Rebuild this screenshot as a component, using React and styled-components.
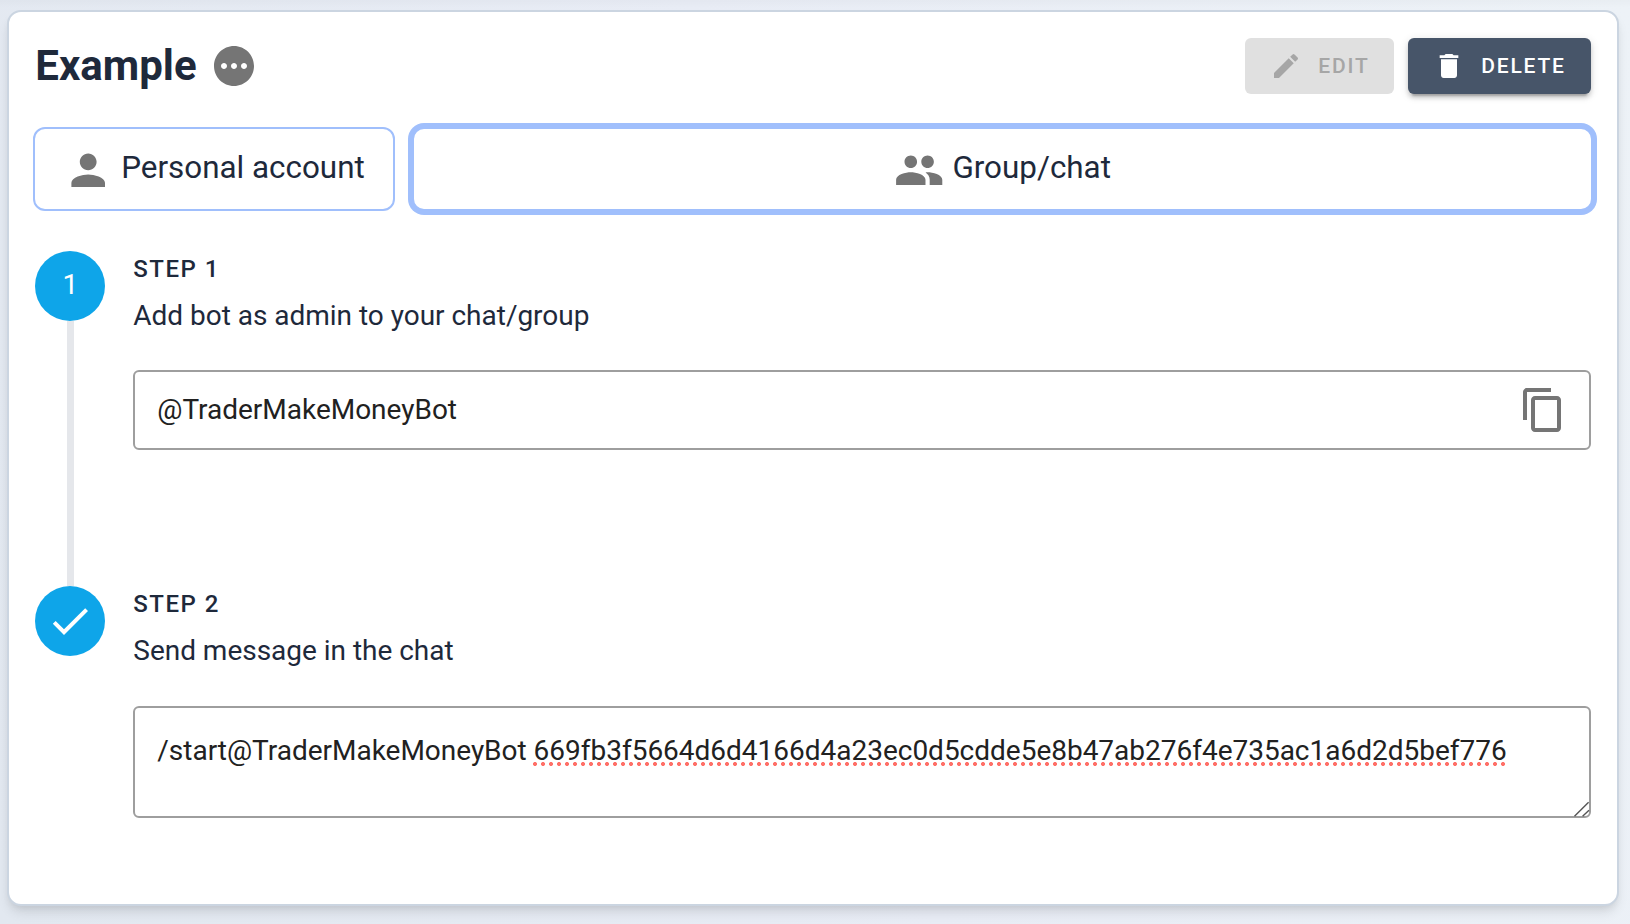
import React from "react";
import styled, { createGlobalStyle, css } from "styled-components";

const GlobalStyle = createGlobalStyle`
  *, *::before, *::after { box-sizing: border-box; }
  body {
    margin: 0;
    font-family: Roboto, "Liberation Sans", sans-serif;
    font-size: 28px;
    color: #1e293b;
  }
  button { font-family: inherit; margin: 0; }
`;

const Page = styled.main`
  display: flex;
  height: 924px;
  padding: 10px 11.3px 18px 7.3px;
  background:
    linear-gradient(to bottom, rgba(0, 0, 0, 0.018), rgba(0, 0, 0, 0) 8px),
    linear-gradient(75deg, #e2e8f0 0%, #e8ecf5 50%, #edf2f7 100%);
`;

const Card = styled.section`
  flex: 1;
  min-width: 0;
  padding: 26px 26px 0 24px;
  background: #fff;
  border: 2px solid #cbd5e1;
  border-radius: 14px;
  box-shadow: 0 8px 12px -2px rgba(0, 0, 0, 0.1), 0 4px 8px -4px rgba(0, 0, 0, 0.1);
`;

const Header = styled.header`
  display: flex;
  align-items: center;
  height: 56px;
  padding-left: 2px;
`;

const Title = styled.h1`
  margin: 0 13px 0 0;
  font-size: 42px;
  font-weight: 700;
  line-height: 56px;
`;

const Actions = styled.div`
  display: flex;
  gap: 14px;
  margin-left: auto;
`;

const ActionButton = styled.button`
  display: flex;
  align-items: center;
  gap: 16.6px;
  width: ${(p) => p.$width}px;
  height: 56px;
  padding: 0 0 0 25px;
  border: 0;
  border-radius: 6px;
  font-size: 21px;
  font-weight: 500;
  letter-spacing: 1.8px;
  white-space: nowrap;
  text-transform: uppercase;
  ${(p) =>
    p.disabled
      ? css`
          background: #e0e0e0;
          color: #a6a6a6;
        `
      : css`
          background: #475569;
          color: #fff;
          box-shadow: 0 6px 2px -4px rgba(0, 0, 0, 0.2), 0 4px 4px rgba(0, 0, 0, 0.14),
            0 2px 10px rgba(0, 0, 0, 0.12);
        `}
`;

const Icon = styled.svg`
  flex: none;
  display: block;
  width: ${(p) => p.$size}px;
  height: ${(p) => p.$size}px;
  fill: ${(p) => p.$color || "currentColor"};
`;

const Tabs = styled.div`
  display: flex;
  gap: 17px;
  margin: 33px -2px 0 0;
`;

const Tab = styled.button`
  display: flex;
  align-items: center;
  justify-content: ${(p) => (p.$active ? "center" : "flex-start")};
  gap: 8px;
  height: 84px;
  padding: ${(p) => (p.$active ? "0" : "0 0 0 27.5px")};
  flex: ${(p) => (p.$active ? "1" : "0 0 362px")};
  background: #fff;
  border: 2px solid #a0bffc;
  border-radius: 12px;
  box-shadow: ${(p) => (p.$active ? "0 0 0 4px #a0bffc" : "none")};
  color: inherit;
  font-size: 31.4px;
  white-space: nowrap;

  svg { margin-top: 2px; }
`;

const TabLabel = styled.span`
  line-height: 40px;
  padding-bottom: 2px;
`;

const Steps = styled.div`
  margin-top: 40px;
  padding-left: 2px;
`;

const Step = styled.div`
  display: flex;
  gap: 28px;
  height: 335px;
`;

const Rail = styled.div`
  display: flex;
  flex-direction: column;
  align-items: center;
  width: 70px;
`;

const Marker = styled.div`
  display: flex;
  align-items: center;
  justify-content: center;
  flex: none;
  width: 70px;
  height: 70px;
  border-radius: 50%;
  background: #0ea5e9;
  color: #fff;
`;

const MarkerNumber = styled.span`
  padding-bottom: 2px;
  line-height: 34px;
`;

const Connector = styled.div`
  flex: 1;
  width: 7px;
  background: #e5e7eb;
`;

const StepBody = styled.div`
  flex: 1;
  min-width: 0;
`;

const StepTitle = styled.div`
  padding-top: 4px;
  font-size: 24px;
  font-weight: 500;
  line-height: 28px;
  letter-spacing: 1.5px;
`;

const StepText = styled.div`
  margin-top: 12px;
  line-height: 42px;
  letter-spacing: -0.02px;
`;

const Field = styled.div`
  position: relative;
  display: flex;
  justify-content: space-between;
  align-items: ${(p) => (p.$multiline ? "flex-start" : "center")};
  height: ${(p) => (p.$multiline ? 112 : 80)}px;
  margin-top: ${(p) => (p.$multiline ? 34 : 33)}px;
  padding: ${(p) => (p.$multiline ? "22px 22px 0" : "0 22px")};
  border: 2px solid #9e9e9e;
  border-radius: 6px;
  color: #212121;
  line-height: 42px;
  letter-spacing: -0.012px;
  white-space: nowrap;
`;

const Misspelled = styled.span`
  display: inline-block;
  margin-left: -2.4px;
  padding-left: 2.4px;
  background: radial-gradient(circle at 4px 4px, #ff7068 1.7px, rgba(255, 112, 104, 0) 2.3px)
    0 30px / 8px 8px repeat-x;
`;

const ResizeGrip = styled.svg`
  position: absolute;
  right: -2px;
  bottom: -2px;
  width: 18px;
  height: 18px;
  fill: none;
  stroke: #555;
  stroke-width: 1.4;
`;

const Glyph = ({ d, size, color }) => (
  <Icon viewBox="0 0 24 24" $size={size} $color={color}>
    <path d={d} />
  </Icon>
);

const icons = {
  pending:
    "M12 2C6.48 2 2 6.48 2 12s4.48 10 10 10 10-4.48 10-10S17.52 2 12 2zM7 13.5c-.83 0-1.5-.67-1.5-1.5s.67-1.5 1.5-1.5 1.5.67 1.5 1.5-.67 1.5-1.5 1.5zm5 0c-.83 0-1.5-.67-1.5-1.5s.67-1.5 1.5-1.5 1.5.67 1.5 1.5-.67 1.5-1.5 1.5zm5 0c-.83 0-1.5-.67-1.5-1.5s.67-1.5 1.5-1.5 1.5.67 1.5 1.5-.67 1.5-1.5 1.5z",
  edit:
    "M3 17.25V21h3.75L17.81 9.94l-3.75-3.75L3 17.25zM20.71 7.04c.39-.39.39-1.02 0-1.41l-2.34-2.34a.9959.9959 0 0 0-1.41 0l-1.83 1.83 3.75 3.75 1.83-1.83z",
  remove: "M6 19c0 1.1.9 2 2 2h8c1.1 0 2-.9 2-2V7H6v12zM19 4h-3.5l-1-1h-5l-1 1H5v2h14V4z",
  person:
    "M12 12c2.21 0 4-1.79 4-4s-1.79-4-4-4-4 1.79-4 4 1.79 4 4 4zm0 2c-2.67 0-8 1.34-8 4v2h16v-2c0-2.66-5.33-4-8-4z",
  group:
    "M16 11c1.66 0 2.99-1.34 2.99-3S17.66 5 16 5c-1.66 0-3 1.34-3 3s1.34 3 3 3zm-8 0c1.66 0 2.99-1.34 2.99-3S9.66 5 8 5C6.34 5 5 6.34 5 8s1.34 3 3 3zm0 2c-2.33 0-7 1.17-7 3.5V19h14v-2.5c0-2.33-4.67-3.5-7-3.5zm8 0c-.29 0-.62.02-.97.05 1.16.84 1.97 1.97 1.97 3.45V19h6v-2.5c0-2.33-4.67-3.5-7-3.5z",
  copy:
    "M16 1H4c-1.1 0-2 .9-2 2v14h2V3h12V1zm3 4H8c-1.1 0-2 .9-2 2v14c0 1.1.9 2 2 2h11c1.1 0 2-.9 2-2V7c0-1.1-.9-2-2-2zm0 16H8V7h11v14z",
  check: "M9 16.17 4.83 12l-1.42 1.41L9 19 21 7l-1.41-1.41z",
};

const GREY = "#757575";

export default function App() {
  return (
    <>
      <GlobalStyle />
      <Page>
        <Card>
          <Header>
            <Title>Example</Title>
            <Glyph d={icons.pending} size={48} color={GREY} />
            <Actions>
              <ActionButton disabled $width={149}>
                <Glyph d={icons.edit} size={32} />
                Edit
              </ActionButton>
              <ActionButton $width={183}>
                <Glyph d={icons.remove} size={32} />
                Delete
              </ActionButton>
            </Actions>
          </Header>

          <Tabs>
            <Tab>
              <Glyph d={icons.person} size={50.4} color={GREY} />
              <TabLabel>Personal account</TabLabel>
            </Tab>
            <Tab $active>
              <Glyph d={icons.group} size={50.4} color={GREY} />
              <TabLabel>Group/chat</TabLabel>
            </Tab>
          </Tabs>

          <Steps>
            <Step>
              <Rail>
                <Marker>
                  <MarkerNumber>1</MarkerNumber>
                </Marker>
                <Connector />
              </Rail>
              <StepBody>
                <StepTitle>STEP 1</StepTitle>
                <StepText>Add bot as admin to your chat/group</StepText>
                <Field>
                  <span>@TraderMakeMoneyBot</span>
                  <Glyph d={icons.copy} size={48} color={GREY} />
                </Field>
              </StepBody>
            </Step>
            <Step>
              <Rail>
                <Marker>
                  <Glyph d={icons.check} size={48} />
                </Marker>
              </Rail>
              <StepBody>
                <StepTitle>STEP 2</StepTitle>
                <StepText>Send message in the chat</StepText>
                <Field $multiline>
                  <span>
                    /start@TraderMakeMoneyBot{" "}
                    <Misspelled>
                      669fb3f5664d6d4166d4a23ec0d5cdde5e8b47ab276f4e735ac1a6d2d5bef776
                    </Misspelled>
                  </span>
                  <ResizeGrip viewBox="0 0 18 18">
                    <path d="M1.5 16.3 15.6 2.2M9.6 16.3 16 10.2" />
                  </ResizeGrip>
                </Field>
              </StepBody>
            </Step>
          </Steps>
        </Card>
      </Page>
    </>
  );
}
